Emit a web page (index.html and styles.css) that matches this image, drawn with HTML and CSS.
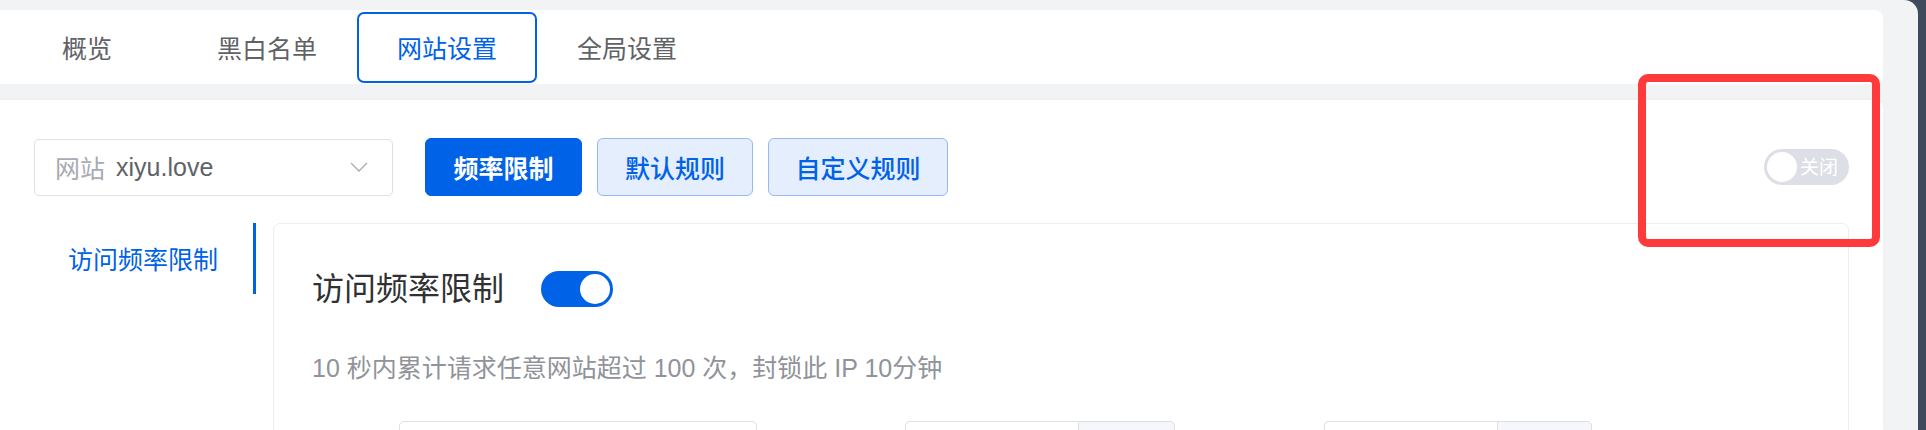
FILE: index.html
```html
<!DOCTYPE html>
<html lang="zh-CN">
<head>
<meta charset="utf-8">
<title>网站设置</title>
<link rel="stylesheet" href="styles.css">
</head>
<body>
<div class="app">
  <div class="tabs-card">
    <nav class="tabs">
      <a class="tab">概览</a>
      <a class="tab">黑白名单</a>
      <a class="tab active">网站设置</a>
      <a class="tab">全局设置</a>
    </nav>
  </div>

  <div class="main-card">
    <div class="toolbar">
      <div class="select">
        <span class="select-prefix">网站</span>
        <span class="select-value">xiyu.love</span>
        <svg class="chevron" width="18" height="10" viewBox="0 0 18 10"><polyline points="1,1 9,9 17,1" fill="none" stroke="#a8abb2" stroke-width="1.3"/></svg>
      </div>
      <button class="btn primary">频率限制</button>
      <button class="btn light">默认规则</button>
      <button class="btn light wide">自定义规则</button>
      <div class="spacer"></div>
      <div class="toggle-off"><span class="knob"></span><span class="toggle-text">关闭</span></div>
    </div>

    <div class="content">
      <aside class="side-nav">
        <div class="side-item active">访问频率限制</div>
      </aside>
      <section class="panel">
        <div class="panel-head">
          <h3 class="panel-title">访问频率限制</h3>
          <span class="switch-on"><span class="knob"></span></span>
        </div>
        <p class="desc">10 秒内累计请求任意网站超过 100 次，封锁此 IP 10分钟</p>
        <div class="form-row">
          <div class="field">
            <span class="label l1"></span>
            <div class="input w1"></div>
          </div>
          <div class="field">
            <span class="label l2"></span>
            <div class="input w2"></div>
            <div class="addon a2"></div>
          </div>
          <div class="field">
            <span class="label l3"></span>
            <div class="input w3"></div>
            <div class="addon a3"></div>
          </div>
        </div>
      </section>
    </div>
  </div>

  <div class="highlight"></div>
</div>
</body>
</html>
```
FILE: styles.css
```css
* { box-sizing: border-box; }
html, body { margin: 0; padding: 0; }
body {
  background: #3f4b5d;
  font-family: "Liberation Sans", "Noto Sans CJK SC", sans-serif;
  overflow: hidden;
  height: 430px;
}
.app {
  position: relative;
  width: 1918px;
  height: 430px;
  background: #f2f3f5;
  border-top-right-radius: 14px;
  padding-top: 10px;
  padding-right: 35px;
}
.tabs-card {
  height: 74px;
  background: #fff;
  border-radius: 0 8px 8px 0;
  display: flex;
  align-items: center;
}
.tabs {
  display: flex;
  margin-left: -3px;
}
.tab {
  width: 180px;
  height: 71px;
  display: flex;
  align-items: center;
  justify-content: center;
  font-size: 25px;
  color: #606266;
  border: 2px solid transparent;
  border-radius: 7px;
}
.tab.active {
  color: #0062e6;
  border-color: #0062e6;
}
.main-card {
  margin-top: 16px;
  background: #fff;
  border-radius: 0 8px 0 0;
  height: 330px;
  padding: 38px 34px 0 34px;
  box-shadow: 0 -1px 2px rgba(0,0,0,0.03);
}
.toolbar {
  display: flex;
  align-items: center;
  height: 58px;
}
.select {
  width: 359px;
  height: 57px;
  border: 1px solid #dcdfe6;
  border-radius: 5px;
  display: flex;
  align-items: center;
  padding: 0 24px 0 20px;
  font-size: 25px;
}
.select-prefix { color: #a8abb2; }
.select-value { color: #606266; margin-left: 11px; flex: 1; }
.chevron { display: block; }
.btn {
  height: 58px;
  font-family: inherit;
  font-size: 25px;
  border-radius: 6px;
  padding: 0;
  margin-right: 15px;
  cursor: pointer;
}
.btn.primary {
  margin-left: 32px;
  width: 157px;
  background: #0062e6;
  border: 1px solid #0062e6;
  color: #fff;
  font-weight: 700;
}
.btn.light {
  width: 156px;
  background: #e5eefc;
  border: 1px solid #94baf5;
  color: #0062e6;
  font-weight: 500;
}
.btn.light.wide { width: 180px; }
.spacer { flex: 1; }
.toggle-off {
  width: 85px;
  height: 36px;
  border-radius: 18px;
  background: #dcdfe6;
  display: flex;
  align-items: center;
  padding: 0 3px;
}
.toggle-off .knob {
  width: 30px;
  height: 30px;
  border-radius: 50%;
  background: #fff;
}
.toggle-text {
  color: #fff;
  font-size: 19px;
  margin-left: 3px;
  line-height: 1;
}
.content {
  display: flex;
  margin-top: 27px;
}
.side-nav {
  width: 222px;
  flex: none;
  margin-right: 17px;
}
.side-item {
  height: 71px;
  border-right: 3px solid #0062e6;
  display: flex;
  align-items: center;
  justify-content: flex-end;
  padding-right: 35px;
  padding-bottom: 2px;
  font-size: 25px;
  color: #0062e6;
}
.panel {
  flex: 1;
  height: 240px;
  border: 1px solid #ebeef5;
  border-radius: 7px;
  padding: 47px 0 0 38px;
}
.panel-head {
  display: flex;
  align-items: center;
  height: 36px;
}
.panel-title {
  margin: 0;
  font-size: 32px;
  font-weight: 400;
  color: #303133;
  line-height: 36px;
}
.switch-on {
  margin-left: 37px;
  width: 72px;
  height: 36px;
  border-radius: 18px;
  background: #0062e6;
  display: flex;
  align-items: center;
  justify-content: flex-end;
  padding: 0 3px;
}
.switch-on .knob {
  width: 30px;
  height: 30px;
  border-radius: 50%;
  background: #fff;
}
.desc {
  margin: 45px 0 0 0;
  font-size: 25px;
  line-height: 32px;
  color: #909399;
}
.form-row {
  display: flex;
  margin-top: 37px;
}
.field {
  display: flex;
  align-items: center;
}
.label { display: block; height: 1px; }
.l1 { width: 87px; }
.l2 { width: 148px; }
.l3 { width: 149px; }
.input {
  height: 57px;
  border: 1px solid #dcdfe6;
  border-radius: 5px;
}
.w1 { width: 358px; }
.w2, .w3 { width: 173px; border-radius: 5px 0 0 5px; border-right: none; }
.addon {
  height: 57px;
  border: 1px solid #dcdfe6;
  border-radius: 0 5px 5px 0;
  background: #f5f7fa;
}
.a2 { width: 97px; }
.a3 { width: 95px; }
.highlight {
  position: absolute;
  left: 1638px;
  top: 74px;
  width: 242px;
  height: 173px;
  border: 8px solid #fe3a3a;
  border-radius: 10px;
  pointer-events: none;
}
```
